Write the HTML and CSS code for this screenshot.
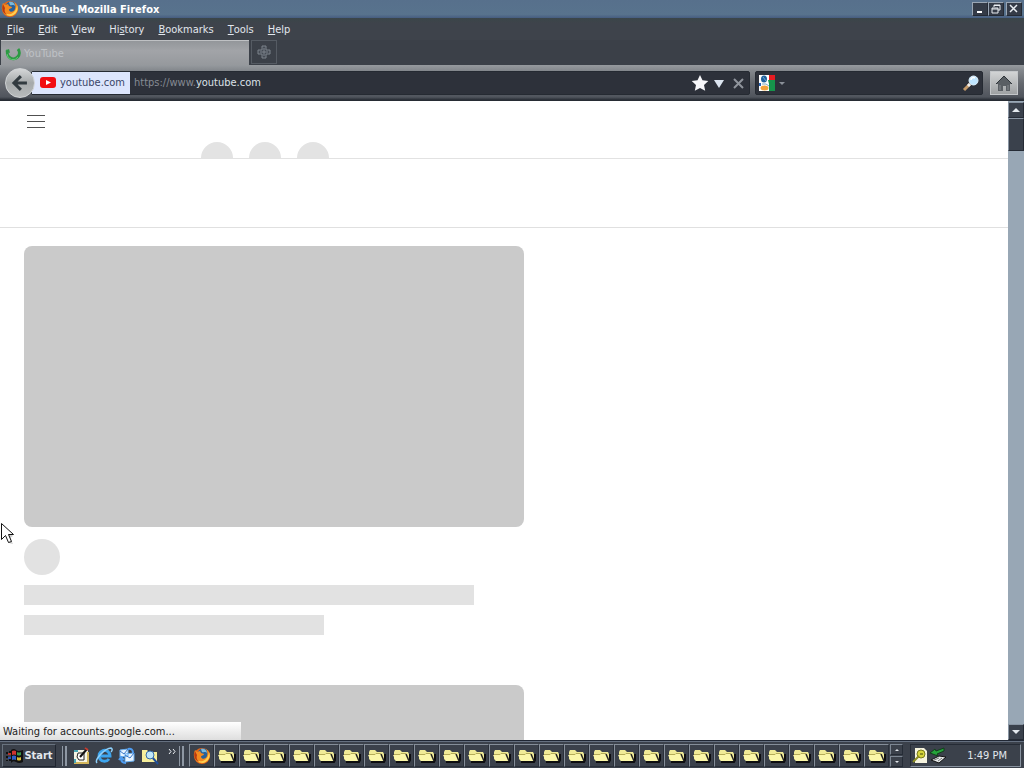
FILE: index.html
```
<!DOCTYPE html>
<html lang="en">
<head>
<meta charset="utf-8">
<title>YouTube - Mozilla Firefox</title>
<link rel="stylesheet" href="styles.css">
</head>
<body>
<svg class="defs" aria-hidden="true">
  <symbol id="folder" viewBox="0 0 18 18">
    <path d="M3 15h13l1-2V7" fill="none" stroke="#0d0d10" stroke-width="2"/>
    <path d="M1 5l1-2h5l2 2h6l1 2v7H3l-2-2z" fill="#f0eb96"/>
    <path d="M0 8h7l1-1h5l3 7H3z" fill="#fbf7a8"/>
    <path d="M1 7.500h6l1-1h5" fill="none" stroke="#b5ac58"/>
    <path d="M13 7l3 7" stroke="#222" stroke-width="1.500"/>
  </symbol>
  <symbol id="firefox" viewBox="0 0 18 18">
    <circle cx="9" cy="9" r="8" fill="#e66516"/>
    <circle cx="10" cy="7" r="5.500" fill="#28619b"/>
    <path d="M8 2c3-1 6 1 6 4-2-2-3 0-5-1z" fill="#79b9dc"/>
    <path d="M2 3l2 2 3-1 1 2 3 1c0 2-3 1-3 3 1 3 5 2 6-1 1-3 0-5-1-7 5 3 5 9 1 12-4 4-11 2-12-3C0 9 1 6 2 3z" fill="#f48a20"/>
    <path d="M16 5c2 5-1 10-6 11-3 0-5-1-7-3 5 3 12 1 13-8z" fill="#ffd052"/>
    <path d="M2 4c-2 5 0 9 4 11-2-2-3-4-2-7z" fill="#b93a12"/>
  </symbol>
</svg>

<header class="titlebar">
  <svg class="icon18"><use href="#firefox"/></svg>
  <h1 class="title">YouTube - Mozilla Firefox</h1>
  <div class="window-buttons">
    <button class="winbtn" aria-label="Minimize"><svg viewBox="0 0 12 12"><path d="M3 9h5" stroke="#fff" stroke-width="2"/></svg></button>
    <button class="winbtn" aria-label="Restore"><svg viewBox="0 0 12 12"><path d="M4 4V2h6v5H8M4 2.500h6M2 5h6v5H2zM2 6h6" fill="none" stroke="#e8edf2"/></svg></button>
    <button class="winbtn winbtn-close" aria-label="Close"><svg viewBox="0 0 12 12"><path d="M2 2l7 7M9 2l-7 7" stroke="#e8edf2" stroke-width="1.500"/></svg></button>
  </div>
</header>

<nav class="menubar">
  <button class="menu"><u>F</u>ile</button>
  <button class="menu"><u>E</u>dit</button>
  <button class="menu"><u>V</u>iew</button>
  <button class="menu">Hi<u>s</u>tory</button>
  <button class="menu"><u>B</u>ookmarks</button>
  <button class="menu"><u>T</u>ools</button>
  <button class="menu"><u>H</u>elp</button>
</nav>

<div class="tabs">
  <button class="tab">
    <svg class="icon18" viewBox="0 0 18 18"><path d="M4 5a6 6 0 1 0 10-1" fill="none" stroke="#2c9a43" stroke-width="3"/><path d="M3 9a6 6 0 0 0 11 3" fill="none" stroke="#61c873" stroke-width="1"/><path d="M1 6l4-2 1 4z" fill="#2c9a43"/></svg>
    <span>YouTube</span>
  </button>
  <button class="newtab" aria-label="New tab"><svg viewBox="0 0 14 14"><path d="M5 1h4v4h4v4H9v4H5V9H1V5h4z" fill="#454b54" stroke="#7d838b"/><path d="M7 3v8M3 7h8" stroke="#7d838b"/></svg></button>
</div>

<div class="toolbar">
  <button class="back" aria-label="Back"><svg viewBox="0 0 30 30"><path d="M16 7l-8 8 8 8M9 15h14" fill="none" stroke="#323b40" stroke-width="3.500"/></svg></button>
  <div class="address">
    <button class="identity">
      <svg viewBox="0 0 16 12"><rect width="16" height="11" rx="3" fill="#f20d12"/><path d="M6 3l5 2.500L6 8z" fill="#fff"/></svg>
      <span>youtube.com</span>
    </button>
    <a class="url" href="#">https://www.<span class="domain">youtube.com</span></a>
    <button class="tool" aria-label="Bookmark this page"><svg viewBox="0 0 18 18"><path d="M9 1l2.500 5.300 5.800.7-4.300 4 1.200 5.800L9 14l-5.200 2.800L5 11 .7 7l5.800-.7z" fill="#f7f7fa"/></svg></button>
    <button class="tool" aria-label="History"><svg viewBox="0 0 18 18"><path d="M4 6h10l-5 8z" fill="#dce5f0"/></svg></button>
    <button class="tool" aria-label="Stop"><svg viewBox="0 0 18 18"><path d="M5 5l9 9M14 5l-9 9" stroke="#8f949c" stroke-width="2"/></svg></button>
  </div>
  <form class="search">
    <button class="engine" type="button" aria-label="Search engine"><svg viewBox="0 0 28 18"><path d="M1 1h10v16H1z" fill="#fff"/><path d="M11 1h6v5h-6z" fill="#e51b21"/><path d="M10 6h7v11h-6V10z" fill="#16934b"/><path d="M1 9h2v3H1z" fill="#2763b4"/><ellipse cx="6" cy="5" rx="3" ry="3.500" fill="#20619c"/><path d="M5 3l3 4" stroke="#6fa5cf"/><path d="M4 10h4l3 2" fill="none" stroke="#7baabd"/><ellipse cx="6.500" cy="14" rx="4" ry="2.500" fill="#f2a33b"/><path d="M21 8h6l-3 3z" fill="#8a9098"/></svg></button>
    <input class="query" type="text" aria-label="Search">
    <button class="go" aria-label="Search"><svg viewBox="0 0 18 18"><path d="M2 16l6-6" stroke="#c59b6a" stroke-width="3"/><path d="M6 12l2-2" stroke="#eee" stroke-width="3"/><circle cx="11.500" cy="6.500" r="4.500" fill="#bfe5ff" stroke="#e0f3ff"/><path d="M9 6c0-2 2-3 4-2" fill="none" stroke="#fff" stroke-width="1.500"/></svg></button>
  </form>
  <button class="home" aria-label="Home"><svg viewBox="0 0 18 18"><path d="M1 10l8-8 8 8h-2v7h-4v-5H8v5H3v-7z" fill="#5a5f64"/><path d="M1 10l8-8 8 8" fill="none" stroke="#30363b"/><path d="M5 11v5M13 11v5" stroke="#868b8e"/></svg></button>
</div>

<div class="viewport">
  <main class="page">
    <header class="masthead">
      <button class="guide" aria-label="Guide"><svg viewBox="0 0 18 14"><path d="M0 .5h18M0 6.500h18M0 12.500h18" stroke="#505050"/></svg></button>
      <div class="dots"><span class="dot"></span><span class="dot"></span><span class="dot"></span></div>
    </header>
    <div class="chips"></div>
    <div class="feed">
      <article class="card">
        <div class="thumb"></div>
        <div class="avatar"></div>
        <div class="line"></div>
        <div class="line line-short"></div>
      </article>
      <article class="card">
        <div class="thumb"></div>
      </article>
    </div>
  </main>
  <div class="scrollbar">
    <button class="scrollbtn" aria-label="Scroll up"><svg viewBox="0 0 8 4"><path d="M0 4l4-4 4 4z" fill="#e4e9ee"/></svg></button>
    <div class="thumbbar"></div>
    <button class="scrollbtn scroll-down" aria-label="Scroll down"><svg viewBox="0 0 8 4"><path d="M0 0l4 4 4-4z" fill="#e4e9ee"/></svg></button>
  </div>
  <div class="status">Waiting for accounts.google.com...</div>
  <svg class="cursor" viewBox="0 0 14 23"><path d="M3 4l10 10-3 2 3 6-4-1z" fill="#000" opacity=".2"/><path d="M1.500 1.500v16l4-4 3 7 3-1-3-7h5z" fill="#fff" stroke="#111"/></svg>
</div>

<footer class="taskbar">
  <button class="start">
    <svg class="icon18" viewBox="0 0 18 18"><path d="M1 5h2v2H1zM1 9h2v2H1zM1 13h2v1H1zM4 4h2v2H4zM4 12h2v2H4z" fill="#111"/><path d="M3 6h3v2H3z" fill="#b8302c"/><path d="M3 10h3v2H3z" fill="#2c50b0"/><path d="M6 3q3-2 5 0t7 0v12q-4 2-7 0t-5 1z" fill="#111"/><path d="M7 4q2-1 4 0v4q-2-1-4 0z" fill="#cf3430"/><path d="M12 5q2 1 4 0v3q-2 1-4 0z" fill="#37974c"/><path d="M7 9q2-1 4 0v4q-2-1-4 0z" fill="#315fc5"/><path d="M12 10q2 1 4 0v3q-2 1-4 0z" fill="#d9bd37"/></svg>
    <span>Start</span>
  </button>
  <span class="grip"></span>
  <div class="quick">
    <button class="launch" aria-label="Show desktop"><svg viewBox="0 0 18 18"><path d="M2 3h14v13H2z" fill="#f5f5e5"/><path d="M2 16h14V5" fill="none" stroke="#d4b75d" stroke-width="2"/><path d="M2 3h4v2H2zM2 12h2v4H2z" fill="#4aa7b5"/><path d="M6 6h6v7H7l-2-3z" fill="#fff" stroke="#222"/><path d="M8 10l7-8" stroke="#111" stroke-width="2"/><path d="M13 1l3 2" stroke="#c43d32" stroke-width="2"/></svg></button>
    <button class="launch" aria-label="Internet Explorer"><svg viewBox="0 0 18 18"><path d="M14 12a5.500 5.500 0 1 1 1-3H5" fill="none" stroke="#3da5ee" stroke-width="3"/><path d="M2 16C-1 13 10 1 16 1c2 1 1 3 0 4" fill="none" stroke="#8ed0fb" stroke-width="1.500"/></svg></button>
    <button class="launch" aria-label="Outlook Express"><svg viewBox="0 0 18 18"><path d="M2 3l8-1v7l-8 1zM7 7l9-1v8l-9 1z" fill="#e8f4ff" stroke="#68aef0"/><path d="M2 4l4 3 4-5M7 8l5 3 4-5" fill="none" stroke="#3777ca"/><path d="M10 2q5-1 5 4M8 16q-5 0-5-5M1 13l2-3 3 3" fill="none" stroke="#4e9cf0" stroke-width="2"/></svg></button>
    <button class="launch" aria-label="Find files"><svg viewBox="0 0 18 18"><path d="M1 3h5l2 2h8v10H1z" fill="#f7ef9b"/><path d="M11 10l6 7" stroke="#1f4f9b" stroke-width="2"/><circle cx="9" cy="8" r="4" fill="#bfe7fa" stroke="#356ca7"/></svg></button>
  </div>
  <button class="more" aria-label="More"><svg viewBox="0 0 8 6"><path d="M1 0l2 2.500L1 5M5 0l2 2.500L5 5" fill="none" stroke="#edf1f5"/></svg></button>
  <span class="grip"></span>
  <div class="tasks">
    <button class="task" aria-label="Firefox"><svg><use href="#firefox"/></svg></button>
    <button class="task" aria-label="Folder 1"><svg><use href="#folder"/></svg></button>
    <button class="task" aria-label="Folder 2"><svg><use href="#folder"/></svg></button>
    <button class="task" aria-label="Folder 3"><svg><use href="#folder"/></svg></button>
    <button class="task" aria-label="Folder 4"><svg><use href="#folder"/></svg></button>
    <button class="task" aria-label="Folder 5"><svg><use href="#folder"/></svg></button>
    <button class="task" aria-label="Folder 6"><svg><use href="#folder"/></svg></button>
    <button class="task" aria-label="Folder 7"><svg><use href="#folder"/></svg></button>
    <button class="task" aria-label="Folder 8"><svg><use href="#folder"/></svg></button>
    <button class="task" aria-label="Folder 9"><svg><use href="#folder"/></svg></button>
    <button class="task" aria-label="Folder 10"><svg><use href="#folder"/></svg></button>
    <button class="task" aria-label="Folder 11"><svg><use href="#folder"/></svg></button>
    <button class="task" aria-label="Folder 12"><svg><use href="#folder"/></svg></button>
    <button class="task" aria-label="Folder 13"><svg><use href="#folder"/></svg></button>
    <button class="task" aria-label="Folder 14"><svg><use href="#folder"/></svg></button>
    <button class="task" aria-label="Folder 15"><svg><use href="#folder"/></svg></button>
    <button class="task" aria-label="Folder 16"><svg><use href="#folder"/></svg></button>
    <button class="task" aria-label="Folder 17"><svg><use href="#folder"/></svg></button>
    <button class="task" aria-label="Folder 18"><svg><use href="#folder"/></svg></button>
    <button class="task" aria-label="Folder 19"><svg><use href="#folder"/></svg></button>
    <button class="task" aria-label="Folder 20"><svg><use href="#folder"/></svg></button>
    <button class="task" aria-label="Folder 21"><svg><use href="#folder"/></svg></button>
    <button class="task" aria-label="Folder 22"><svg><use href="#folder"/></svg></button>
    <button class="task" aria-label="Folder 23"><svg><use href="#folder"/></svg></button>
    <button class="task" aria-label="Folder 24"><svg><use href="#folder"/></svg></button>
    <button class="task" aria-label="Folder 25"><svg><use href="#folder"/></svg></button>
    <button class="task" aria-label="Folder 26"><svg><use href="#folder"/></svg></button>
    <button class="task" aria-label="Folder 27"><svg><use href="#folder"/></svg></button>
  </div>
  <div class="spinner">
    <button class="spin" aria-label="Previous row"><svg viewBox="0 0 4 2"><path d="M0 2l2-2 2 2z" fill="#dfe4e9"/></svg></button>
    <button class="spin" aria-label="Next row"><svg viewBox="0 0 4 2"><path d="M0 0l2 2 2-2z" fill="#dfe4e9"/></svg></button>
  </div>
  <div class="tray">
    <svg class="icon18" viewBox="0 0 18 18"><path d="M4 1h9l3 3v12H4z" fill="#f6f4df"/><circle cx="10" cy="7" r="4" fill="#d6d53c" stroke="#77791e"/><path d="M8 9l-6 6M9 7h3" stroke="#8d8e25" stroke-width="2"/></svg>
    <svg class="icon18" viewBox="0 0 18 18"><path d="M2 13l8-4 7 1-7 6z" fill="#e5e8e8" stroke="#111"/><path d="M5 13l5-2M9 14l4-3" stroke="#777"/><path d="M1 6l5-4 1 2 8-3v3L8 7l1 2z" fill="#25a33a" stroke="#123d1b"/></svg>
    <time class="clock">1:49 PM</time>
  </div>
</footer>
</body>
</html>
```
FILE: styles.css
```
* { box-sizing: border-box; }
body {
  margin: 0;
  height: 100vh;
  display: flex;
  flex-direction: column;
  overflow: hidden;
  background: #3c4149;
  color: #e2e7ed;
  font: 11px/16px "DejaVu Sans Condensed", "DejaVu Sans", sans-serif;
}
button, input {
  font: inherit;
  color: inherit;
  background: none;
  border: 0;
  padding: 0;
  margin: 0;
}
button { display: flex; align-items: center; justify-content: center; flex: none; }
svg { display: block; flex: none; }
.defs { position: absolute; width: 0; height: 0; }
.icon18 { width: 18px; height: 18px; }

.titlebar {
  display: flex;
  align-items: center;
  height: 18px;
  padding: 0 2px 0 1px;
  flex: none;
  background: linear-gradient(#57708c, #58738d 80%, #465d80);
}
.title { flex: 1; margin: 0; padding: 1px 0 0 1px; font-size: 11px; line-height: 16px; color: #fff; }
.window-buttons { display: flex; }
.winbtn {
  width: 16px;
  height: 14px;
  background: #343b47;
  border: 1px solid #242a34;
  border-top-color: #9aa6b4;
  border-left-color: #9aa6b4;
}
.winbtn svg { width: 12px; height: 12px; }
.winbtn-close { margin-left: 2px; }

.menubar {
  display: flex;
  gap: 14px;
  height: 22px;
  padding: 2px 7px 0;
  flex: none;
  background: linear-gradient(#3a4649, #3e434b 25%);
}

.tabs { display: flex; height: 25px; flex: none; padding-left: 1px; background: #3b4048; }
.tab {
  width: 248px;
  gap: 2px;
  padding: 2px 0 0 3px;
  justify-content: flex-start;
  color: #bec1c5;
  background: linear-gradient(#93969a, #a2a4a8 40%, #96999d);
  border-top: 1px solid #bfc1c4;
}
.newtab { width: 26px; height: 24px; margin-left: 2px; border: 1px solid #555b63; }
.newtab svg { width: 14px; height: 14px; }

.toolbar {
  display: flex;
  align-items: center;
  height: 36px;
  padding: 0 6px 0 5px;
  flex: none;
  background: linear-gradient(#969a9e 0, #85898e 5px, #666a70 18px, #50555d 32px, #272c34 35px);
}
.back {
  width: 30px;
  height: 30px;
  border-radius: 50%;
  background: linear-gradient(#d4d6d7, #a5a9aa 50%, #b8bbbc);
  border: 1px solid #d0d3d5;
  z-index: 1;
}
.back svg { width: 26px; height: 26px; }
.address, .search { display: flex; align-items: center; height: 24px; background: #2d313a; border: 1px solid #252a32; border-radius: 2px; }
.address { flex: 1; margin-left: -4px; }
.identity { height: 22px; gap: 4px; padding: 0 5px 0 8px; background: #dce5fc; color: #3a4668; }
.identity svg { width: 16px; height: 12px; }
.url { flex: 1; padding-left: 4px; color: #858b93; text-decoration: none; }
.domain { color: #dce2e8; }
.tool { width: 19px; }
.tool:last-child { margin-right: 2px; }
.tool svg, .go svg, .home svg { width: 18px; height: 18px; }
.search { flex: 0 1 228px; margin-left: 5px; padding: 0 2px; }
.engine svg { width: 28px; height: 18px; }
.query { flex: 1; min-width: 0; }
.home { width: 28px; height: 24px; margin-left: 7px; background: linear-gradient(#d2d4d5, #9ea1a3); border: 1px solid #c4c7ca; }

.viewport { display: flex; flex: 1; min-height: 0; position: relative; background: #fff; }
.page { flex: 1; overflow: hidden; background: #fff; }
.masthead { display: flex; align-items: flex-start; height: 58px; overflow: hidden; padding: 14px 27px 0; border-bottom: 1px solid #e2e2e2; }
.guide svg { width: 18px; height: 14px; }
.dots { display: flex; gap: 16px; margin: 27px 0 0 156px; }
.dot { width: 32px; height: 32px; border-radius: 50%; background: #e3e3e3; }
.chips { height: 69px; border-bottom: 1px solid #e0e0e0; }
.feed { display: flex; flex-direction: column; gap: 50px; padding: 18px 24px; }
.thumb { width: 500px; max-width: 100%; aspect-ratio: 16 / 9; border-radius: 8px; background: #cacaca; }
.avatar { width: 36px; height: 36px; margin-top: 12px; border-radius: 50%; background: #e2e2e2; }
.line { width: 450px; max-width: 90%; height: 20px; margin-top: 10px; background: #e2e2e2; }
.line-short { width: 300px; }

.scrollbar { display: flex; flex-direction: column; width: 16px; flex: none; background: #98a7b5; }
.scrollbtn, .thumbbar { background: #3a414c; border: 1px solid #252b35; border-top-color: #8995a3; border-left-color: #8995a3; }
.scrollbtn { height: 16px; margin-top: 1px; }
.scrollbtn svg { width: 8px; height: 4px; }
.thumbbar { height: 33px; }
.scroll-down { margin-top: auto; }
.status { position: absolute; left: 0; bottom: 0; width: 241px; height: 18px; padding: 2px 0 0 3px; background: linear-gradient(#fff, #dedede); color: #222; }
.cursor { position: absolute; left: 0; top: 421px; width: 14px; height: 23px; }

.taskbar {
  display: flex;
  align-items: center;
  height: 28px;
  flex: none;
  padding: 2px 3px 0 2px;
  background: #3b414b;
  border-top: 1px solid #202734;
  box-shadow: inset 0 1px #657080;
}
.start { gap: 1px; width: 54px; height: 23px; border: 1px solid #202630; border-top-color: #68727e; border-left-color: #68727e; font-weight: bold; }
.grip { width: 5px; height: 20px; margin-left: 6px; border-left: 1px solid #8e97a3; border-right: 2px solid #8e97a3; }
.quick { display: flex; gap: 5px; margin-left: 5px; }
.launch svg { width: 18px; height: 18px; }
.more { margin: 0 0 8px 9px; }
.more svg { width: 8px; height: 6px; }
.more + .grip { margin-left: 3px; }
.tasks { display: flex; flex: 1; margin-left: 5px; min-width: 0; }
.task { flex: 0 1 25px; height: 23px; border: 1px solid #2a303a; border-top-color: #858e99; border-left-color: #858e99; }
.task svg { width: 18px; height: 18px; }
.spinner { display: flex; flex-direction: column; gap: 1px; margin-right: 7px; }
.spin { width: 13px; height: 11px; border: 1px solid #252c36; border-top-color: #7d8793; border-left-color: #7d8793; }
.spin svg { width: 4px; height: 2px; }
.tray { display: flex; align-items: center; width: 111px; height: 23px; border: 1px solid #8993a0; border-top-color: #252b35; border-left-color: #252b35; }
.clock { margin: 0 13px 0 auto; }
```
